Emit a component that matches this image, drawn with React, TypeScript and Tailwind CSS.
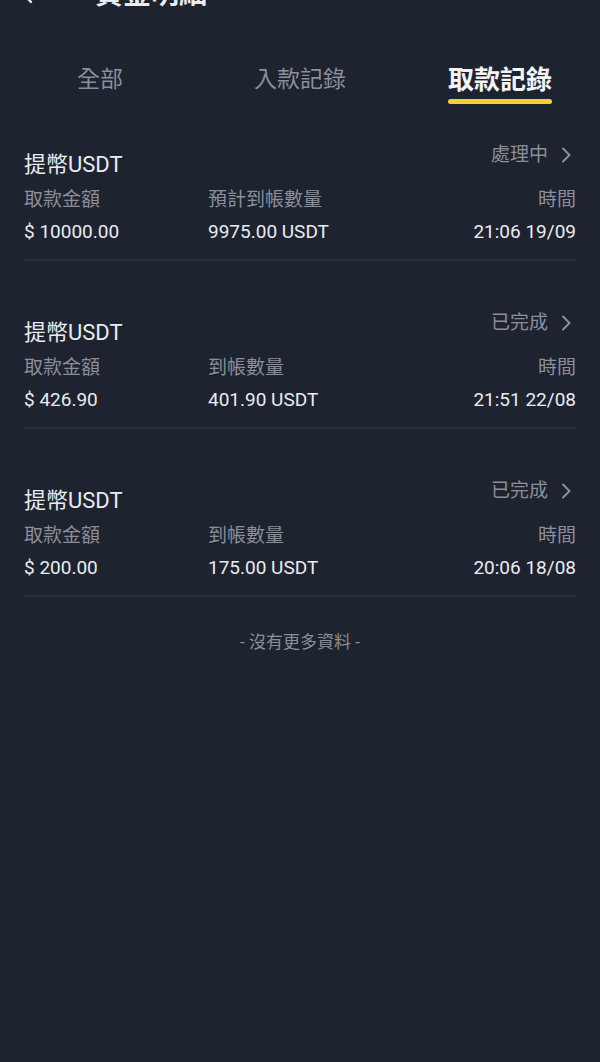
import React from 'react';

const records = [
  { status: '處理中', qtyLabel: '預計到帳數量', amount: '$ 10000.00', qty: '9975.00 USDT', time: '21:06 19/09' },
  { status: '已完成', qtyLabel: '到帳數量', amount: '$ 426.90', qty: '401.90 USDT', time: '21:51 22/08' },
  { status: '已完成', qtyLabel: '到帳數量', amount: '$ 200.00', qty: '175.00 USDT', time: '20:06 18/08' },
];

const tabs = ['全部', '入款記錄', '取款記錄'];

function Chevron() {
  return (
    <svg width="12" height="16" viewBox="0 0 12 16" className="ml-[12px] mr-[4px]">
      <path d="M3 1.5 L9.5 8 L3 14.5" fill="none" stroke="#8a8f98" strokeWidth="2" strokeLinecap="round" strokeLinejoin="round" />
    </svg>
  );
}

export default function App() {
  return (
    <div
      className="w-[600px] h-[1062px] overflow-hidden bg-[#1e2330] text-[#eaecef]"
      style={{ fontFamily: "Roboto, 'Noto Sans CJK TC', sans-serif" }}
    >
      {/* header, mostly scrolled off */}
      <div className="flex items-center h-[48px] -mt-[29px]">
        <svg width="24" height="24" viewBox="0 0 24 24" className="ml-[20px]">
          <path d="M20 12 H5 M11 5 L4 12 L11 19" fill="none" stroke="#eaecef" strokeWidth="2.4" strokeLinecap="round" strokeLinejoin="round" />
        </svg>
        <span className="ml-[51px] text-[28px] font-bold leading-none">資金明細</span>
      </div>

      <div className="grid grid-cols-3 mt-[45px]">
        {tabs.map((t, i) => {
          const active = i === 2;
          return (
            <div key={t} className="flex flex-col items-center">
              <span className={active ? 'text-[26px] leading-[32px] font-bold text-[#f3f4f6]' : 'text-[23px] leading-[32px] text-[#8a8f98]'}>
                {t}
              </span>
              <span className={active ? 'mt-[3px] h-[5px] w-[104px] rounded-full bg-[#f2cf32]' : 'mt-[3px] h-[5px]'} />
            </div>
          );
        })}
      </div>

      <ul className="flex flex-col gap-[11px] px-6">
        {records.map((r, i) => (
          <li key={i} className="pt-[36px] pb-[14px] border-b-2 border-[#2a2f3a]">
            <div className="flex items-start justify-between">
              <span className="mt-[10px] text-[22px] leading-[30px]">提幣USDT</span>
              <span className="flex items-center text-[19px] leading-[30px] text-[#8a8f98]">
                {r.status}
                <Chevron />
              </span>
            </div>
            <div className="grid grid-cols-[184px_1fr_auto] mt-[7px] text-[19px] leading-[26px] text-[#8a8f98]">
              <span>取款金額</span>
              <span>{r.qtyLabel}</span>
              <span className="text-right">時間</span>
            </div>
            <div className="grid grid-cols-[184px_1fr_auto] mt-[6px] text-[19px] leading-[26px]">
              <span>{r.amount}</span>
              <span>{r.qty}</span>
              <span className="text-right">{r.time}</span>
            </div>
          </li>
        ))}
      </ul>

      <p className="mt-[33px] text-center text-[17px] leading-[24px] text-[#8a8f98]">- 沒有更多資料 -</p>
    </div>
  );
}
